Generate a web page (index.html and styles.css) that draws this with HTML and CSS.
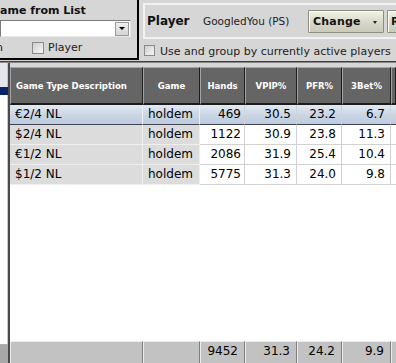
FILE: index.html
```html
<!DOCTYPE html>
<html>
<head>
<meta charset="utf-8">
<link rel="stylesheet" href="styles.css">
</head>
<body>
<div class="top">
  <div class="leftbox">
    <div class="lb-title">ame from List</div>
    <div class="combo">
      <div class="combo-btn"><span class="tri"></span></div>
    </div>
    <div class="lb-row"><span class="cut">n</span><span class="chk big"></span><span class="lbl">Player</span></div>
  </div>
  <div class="rightside">
    <div class="ppanel">
      <span class="plabel">Player</span>
      <span class="pname">GoogledYou (PS)</span>
      <span class="btn change"><span class="btxt">Change</span><span class="arr"></span></span>
      <span class="btn rbtn"><span class="btxt">R</span></span>
    </div>
    <div class="crow"><span class="chk small"></span><span class="ctext">Use and group by currently active players</span></div>
  </div>
</div>
<div class="sep"></div>
<div class="main">
  <div class="strip">
    <div class="strip-top"></div>
    <div class="strip-sel"></div>
    <div class="strip-list"></div>
    <div class="strip-bot"></div>
  </div>
  <div class="vline"></div>
  <div class="grid">
    <div class="gpad"></div>
    <div class="row head">
      <div class="c">Game Type Description</div>
      <div class="c">Game</div>
      <div class="c">Hands</div>
      <div class="c">VPIP%</div>
      <div class="c">PFR%</div>
      <div class="c">3Bet%</div>
      <div class="c"></div>
    </div>
    <div class="row data sel">
      <div class="c t">€2/4 NL</div>
      <div class="c t">holdem</div>
      <div class="c n h">469</div>
      <div class="c n">30.5</div>
      <div class="c n">23.2</div>
      <div class="c n">6.7</div>
      <div class="c n"></div>
    </div>
    <div class="row data">
      <div class="c t">$2/4 NL</div>
      <div class="c t">holdem</div>
      <div class="c n h">1122</div>
      <div class="c n">30.9</div>
      <div class="c n">23.8</div>
      <div class="c n">11.3</div>
      <div class="c n"></div>
    </div>
    <div class="row data">
      <div class="c t">€1/2 NL</div>
      <div class="c t">holdem</div>
      <div class="c n h">2086</div>
      <div class="c n">31.9</div>
      <div class="c n">25.4</div>
      <div class="c n">10.4</div>
      <div class="c n"></div>
    </div>
    <div class="row data">
      <div class="c t">$1/2 NL</div>
      <div class="c t">holdem</div>
      <div class="c n h">5775</div>
      <div class="c n">31.3</div>
      <div class="c n">24.0</div>
      <div class="c n">9.8</div>
      <div class="c n"></div>
    </div>
    <div class="filler"></div>
    <div class="row foot">
      <div class="c"></div>
      <div class="c"></div>
      <div class="c">9452</div>
      <div class="c">31.3</div>
      <div class="c">24.2</div>
      <div class="c">9.9</div>
      <div class="c"></div>
    </div>
  </div>
</div>
</body>
</html>
```
FILE: styles.css
```css
* { box-sizing: border-box; }
html, body {
  margin: 0;
  padding: 0;
}
body {
  width: 396px;
  height: 363px;
  overflow: hidden;
  background: #d6d6d6;
  font-family: "DejaVu Sans", Verdana, sans-serif;
  color: #000;
}

/* ---------- top area ---------- */
.top {
  display: flex;
  height: 61px;
}
.leftbox {
  width: 139px;
  height: 60px;
  border-right: 2px solid #000;
  border-bottom: 2px solid #000;
  flex: none;
}
.lb-title {
  font-weight: bold;
  font-size: 11px;
  line-height: 13px;
  padding-top: 4px;
  color: #111;
  white-space: nowrap;
}
.combo {
  margin-top: 3px;
  width: 131px;
  height: 17px;
  background: #fff;
  border-top: 1px solid #7c7c7c;
  border-left: 1px solid #7c7c7c;
  border-right: 1px solid #e8e8e8;
  border-bottom: 1px solid #e8e8e8;
  display: flex;
  justify-content: flex-end;
  align-items: center;
  padding-right: 1px;
}
.combo-btn {
  width: 14px;
  height: 14px;
  background: linear-gradient(#f0f0f0, #d4d4d4);
  border: 1px solid #9a9a9a;
  display: flex;
  align-items: center;
  justify-content: center;
}
.tri {
  width: 0;
  height: 0;
  border-left: 3px solid transparent;
  border-right: 3px solid transparent;
  border-top: 3px solid #000;
}
.lb-row {
  margin-top: 4px;
  display: flex;
  align-items: center;
  height: 13px;
  font-size: 11px;
}
.cut {
  width: 36px;
  margin-left: -4px;
  padding-left: 0;
  line-height: 13px;
  color: #111;
}
.chk {
  display: inline-block;
  flex: none;
  border: 1px solid #8a8a8a;
  background: linear-gradient(135deg, #cfcfcf, #f6f6f6);
}
.chk.big { width: 12px; height: 12px; }
.chk.small { width: 11px; height: 11px; }
.lbl {
  margin-left: 4px;
  color: #222;
  line-height: 13px;
}

.rightside {
  margin-left: 4px;
  flex: 1;
  min-width: 0;
}
.ppanel {
  margin-top: 3px;
  height: 36px;
  border: 2px solid #f2f2f2;
  border-right: none;
  display: flex;
  align-items: center;
  padding-left: 2px;
  white-space: nowrap;
  overflow: hidden;
}
.plabel {
  width: 56px;
  flex: none;
  font-weight: bold;
  font-size: 12px;
  color: #111;
}
.pname {
  width: 105px;
  flex: none;
  font-size: 10.5px;
  color: #222;
}
.btn {
  flex: none;
  height: 23px;
  border: 1px solid #8e8e80;
  border-radius: 1px;
  background: linear-gradient(#f2f2e6, #d6d6c6 60%, #cacaba);
  box-shadow: inset 1px 1px 0 #fbfbf4;
  display: flex;
  align-items: center;
  font-weight: bold;
  font-size: 11px;
  color: #141414;
  padding-left: 4px;
}
.change {
  width: 76px;
}
.btxt {
  letter-spacing: 0.2px;
}
.arr {
  margin-left: 12px;
  width: 0;
  height: 0;
  border-left: 2.5px solid transparent;
  border-right: 2.5px solid transparent;
  border-top: 3px solid #222;
  margin-top: 2px;
}
.rbtn {
  margin-left: 3px;
  width: 30px;
  padding-left: 3px;
}
.crow {
  margin-top: 6px;
  display: flex;
  align-items: center;
  height: 11px;
  padding-left: 1px;
}
.ctext {
  margin-left: 5px;
  font-size: 11px;
  color: #222;
  white-space: nowrap;
  line-height: 11px;
  padding-top: 1px;
}

.sep {
  height: 2px;
  background: #3c3c3c;
  border-bottom: 1px solid #8a8a8a;
}

/* ---------- main area ---------- */
.main {
  display: flex;
  height: 300px;
}
.strip {
  width: 8px;
  flex: none;
  display: flex;
  flex-direction: column;
}
.strip-top {
  height: 24px;
  background: #e4e6ec;
  border-right: 1px solid #c4c4c4;
}
.strip-sel {
  height: 8px;
  background: #0a246a;
}
.strip-list {
  height: 250px;
  background: #fff;
  border-right: 1px solid #c8c8c8;
  border-bottom: 1px solid #b0b0b0;
}
.strip-bot {
  flex: 1;
  background: #a8a8a8;
}
.vline {
  width: 2px;
  flex: none;
  background: #4a4a4a;
}
.grid {
  flex: 1;
  min-width: 0;
  display: flex;
  flex-direction: column;
}
.gpad {
  height: 4px;
  background: #d6d6d6;
}
.row {
  display: grid;
  grid-template-columns: 133px 57px 45px 52px 45px 49px 1fr;
}
.head {
  height: 39px;
}
.head .c {
  background: #656565;
  border-top: 1px solid #a4a4a4;
  border-left: 1px solid #a4a4a4;
  border-right: 1px solid #1c1c1c;
  border-bottom: 2px solid #1c1c1c;
  color: #fff;
  font-family: "DejaVu Sans Condensed", "DejaVu Sans", sans-serif;
  font-weight: bold;
  font-size: 9.5px;
  display: flex;
  align-items: center;
  justify-content: center;
  white-space: nowrap;
  overflow: hidden;
  padding-bottom: 1px;
}
.head .c:first-child {
  justify-content: flex-start;
  padding-left: 5px;
}
.data {
  height: 20px;
}
.data .c {
  font-size: 12px;
  line-height: 19px;
  white-space: nowrap;
  overflow: hidden;
}
.data .t {
  background: #dcdcdc;
  border-right: 1px solid #efefef;
  border-bottom: 1px solid #efefef;
  padding-left: 5px;
}
.data .n {
  background: #fff;
  border-right: 1px solid #d2d2d2;
  border-bottom: 1px solid #d2d2d2;
  text-align: right;
  padding-right: 5px;
}
.data .n.h {
  padding-right: 3px;
}
.data.sel .c {
  background: linear-gradient(#e2e9f2, #c9d5e4 55%, #bccbde);
  border-bottom: 1px solid #3e4250;
}
.filler {
  height: 159px;
  background: #fff;
}
.foot {
  height: 22px;
}
.foot .c {
  background: #c2c2c2;
  border-top: 1px solid #ececec;
  border-left: 1px solid #ececec;
  border-right: 1px solid #7e7e7e;
  font-size: 12px;
  line-height: 15px;
  padding-top: 2px;
  text-align: right;
  padding-right: 6px;
  white-space: nowrap;
}
```
